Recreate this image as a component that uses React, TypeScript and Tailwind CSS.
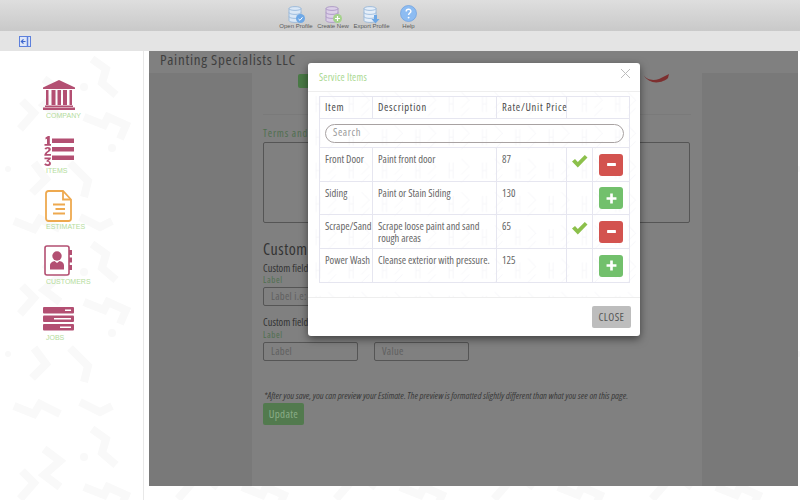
const narrow = "font-['Open_Sans',sans-serif] font-stretch-condensed";

function Cylinder({ fill, line }: { fill: string; line: string }) {
  return (
    <g stroke={line} strokeWidth="0.8">
      <path d="M2 4.5C2 2 14 2 14 4.5V16.5C14 19 2 19 2 16.5Z" fill={fill} />
      <path d="M2 4.5C2 7 14 7 14 4.5M2 8.5C2 11 14 11 14 8.5M2 12.5C2 15 14 15 14 12.5" fill="none" />
    </g>
  );
}

function OpenIcon() {
  return (
    <svg width="19" height="20" viewBox="0 0 19 20">
      <Cylinder fill="#dbe8f6" line="#8fb2d8" />
      <circle cx="13.5" cy="14.5" r="4.5" fill="#6ea8e6" />
      <path d="M11.5 15l1.5 1.3 2.5-3" fill="none" stroke="#fff" strokeWidth="1" />
    </svg>
  );
}

function CreateIcon() {
  return (
    <svg width="19" height="20" viewBox="0 0 19 20">
      <Cylinder fill="#dcd0e8" line="#a48fc0" />
      <circle cx="13.5" cy="14.5" r="4.5" fill="#a5d28c" />
      <path d="M13.5 12v5M11 14.5h5" fill="none" stroke="#fff" strokeWidth="1.2" />
    </svg>
  );
}

function ExportIcon() {
  return (
    <svg width="19" height="20" viewBox="0 0 19 20">
      <Cylinder fill="#e6eff9" line="#8fb2d8" />
      <path d="M12 11h3v4h2.5l-4 4.5-4-4.5H12Z" fill="#6ea8e6" />
    </svg>
  );
}

function HelpIcon() {
  return (
    <svg width="17" height="17" viewBox="0 0 17 17">
      <circle cx="8.5" cy="8.5" r="8" fill="#8dbcf2" stroke="#6c9fe0" strokeWidth="0.7" />
      <path d="M6.2 6.4C6.2 3.6 10.9 3.6 10.9 6.3 10.9 8 8.6 8 8.6 10" fill="none" stroke="#fff" strokeWidth="1.4" />
      <circle cx="8.6" cy="12.6" r="0.95" fill="#fff" />
    </svg>
  );
}

function CompanyIcon() {
  return (
    <svg width="32" height="30" viewBox="0 0 32 30" fill="#b34f72">
      <path d="M16 0 32 7.5V9H0V7.5Z" />
      <path d="M3 10h2.5v15H3zM8.5 10h4v15h-4zM14.5 10h3.5v15h-3.5zM20 10h4v15h-4zM26.5 10H29v15h-2.5z" />
      <path d="M2 25.5h28V27H2zM0 27.5h32V30H0z" />
    </svg>
  );
}

function ItemsIcon() {
  return (
    <svg width="31" height="30" viewBox="0 0 31 30" fill="#b34f72">
      <rect x="9" y="2.5" width="22" height="4.5" />
      <rect x="9" y="11" width="22" height="4.5" />
      <rect x="9" y="19.5" width="22" height="4.5" />
      <path d="M2.5 1.5 5 0h1.8v8H8v1.8H1.5V8H4V2.8L2.5 3.6Z" />
      <path d="M1.5 13C1.800 10.500 7.800 10 7.800 13.300 7.800 15.500 4.500 16 3.800 18H8v1.700H1.300C1.300 16 5.500 15 5.500 13.400 5.500 12.200 3.800 12.200 3.400 13.500Z" />
      <path d="M1.500 21.500H7.800V23L5.300 25C9.300 25.500 8.500 30.300 4.500 30 2.800 30 1.800 29.300 1.200 28.300L2.800 27.300C3.500 28.600 6 28.600 6 27 6 25.800 4.800 25.800 3.600 25.900V24.500L5.300 23.200H1.500Z" />
    </svg>
  );
}

function EstimatesIcon() {
  return (
    <svg width="27" height="32" viewBox="0 0 27 32" fill="none" stroke="#eea94f">
      <path d="M3.500 1H18L26 9.500V28.500C26 30 25 31 23.500 31H3.500C2 31 1 30 1 28.500V3.500C1 2 2 1 3.500 1Z" strokeWidth="1.800" />
      <path d="M18 1.500V9.500H25.500" strokeWidth="1.800" />
      <path d="M8 14.500H20M10.500 19H20M8 23.500H20" strokeWidth="1.800" />
    </svg>
  );
}

function CustomersIcon() {
  return (
    <svg width="29" height="31" viewBox="0 0 29 31">
      <rect x="1" y="1" width="24" height="29" rx="2" fill="#fff" stroke="#b34f72" strokeWidth="1.600" />
      <path d="M25 5h3v5h-3zM25 12.500h3v5h-3zM25 20h3v5h-3z" fill="#b34f72" />
      <circle cx="13" cy="11" r="4.700" fill="#b34f72" />
      <path d="M6 24.500V20.500C6 17.500 9 16.500 10.500 16L13 18 15.500 16C17.500 16.500 20 17.500 20 20.500V24.500Z" fill="#b34f72" />
    </svg>
  );
}

function JobsIcon() {
  return (
    <svg width="31" height="24" viewBox="0 0 31 24">
      <rect y="0" width="31" height="6.500" rx="1" fill="#b34f72" />
      <rect y="8.500" width="31" height="6.500" rx="1" fill="#b34f72" />
      <rect y="17" width="31" height="6.500" rx="1" fill="#b34f72" />
      <rect x="22" y="2.500" width="6" height="1.500" fill="#fff" />
      <rect x="11" y="11" width="17" height="1.500" fill="#fff" />
      <rect x="17" y="19.500" width="11" height="1.500" fill="#fff" />
    </svg>
  );
}

const tools = [
  { label: 'Open Profile', icon: <OpenIcon />, cls: 'w-[36px]' },
  { label: 'Create New', icon: <CreateIcon />, cls: 'w-[36px]' },
  { label: 'Export Profile', icon: <ExportIcon />, cls: 'w-[39px]' },
  { label: 'Help', icon: <HelpIcon />, cls: 'w-[33px]' },
];

const navItems = [
  { label: 'COMPANY', icon: <CompanyIcon />, cls: 'h-[56px]', box: 'h-[31px]', pad: 'pl-0' },
  { label: 'ITEMS', icon: <ItemsIcon />, cls: 'h-[54px]', box: 'h-[30px]', pad: 'pl-0' },
  { label: 'ESTIMATES', icon: <EstimatesIcon />, cls: 'h-[55px]', box: 'h-[32px]', pad: 'pl-[2px]' },
  { label: 'CUSTOMERS', icon: <CustomersIcon />, cls: 'h-[62px]', box: 'h-[32px]', pad: 'pl-[1px]' },
  { label: 'JOBS', icon: <JobsIcon />, cls: 'h-[40px]', box: 'h-[26px]', pad: 'pl-0' },
];

const rows = [
  { item: 'Front Door', desc: 'Paint front door', rate: '87', added: true, h: 'h-[34px]' },
  { item: 'Siding', desc: 'Paint or Stain Siding', rate: '130', added: false, h: 'h-[33px]' },
  { item: 'Scrape/Sand', desc: 'Scrape loose paint and sand rough areas', rate: '65', added: true, h: 'h-[34px]' },
  { item: 'Power Wash', desc: 'Cleanse exterior with pressure.', rate: '125', added: false, h: 'h-[34px]' },
];

function Zigzags() {
  return (
    <svg className="absolute inset-0 h-full w-full" aria-hidden="true">
      <defs>
        <pattern id="zig" x="0" y="0" width="158" height="185" patternUnits="userSpaceOnUse">
          <g fill="none" stroke="#f9f9f9" strokeWidth="8">
            <path d="M44 28 60 40 44 54 60 66" />
            <path d="M22 50 34 62 20 78" />
            <path d="M92 8 106 18 102 32 116 44" />
            <path d="M84 66 104 74 108 66 126 74 120 88" />
            <path d="M34 112 46 128 32 142" />
            <path d="M70 112 88 130 84 146" />
            <path d="M14 170 34 178 40 168 60 178" />
            <path d="M80 166 100 176 112 170" />
          </g>
          <circle cx="84" cy="36" r="4" fill="#f9f9f9" />
          <circle cx="112" cy="97" r="4" fill="#f9f9f9" />
          <circle cx="8" cy="118" r="3" fill="#f9f9f9" />
        </pattern>
      </defs>
      <rect width="100%" height="100%" fill="url(#zig)" />
    </svg>
  );
}

function ModalPattern() {
  return (
    <svg className="absolute inset-0 h-full w-full" aria-hidden="true">
      <defs>
        <pattern id="hex" x="0" y="0" width="33.300" height="33.300" patternUnits="userSpaceOnUse">
          <path d="M8 4V20M12 4V20M8 12H12M20 0 28 8 20 16M28 16 20 24" fill="none" stroke="#f4f4f8" strokeWidth="0.800" />
        </pattern>
      </defs>
      <rect width="100%" height="100%" fill="url(#hex)" />
    </svg>
  );
}

function ActionButton({ added }: { added: boolean }) {
  return (
    <button className={`mx-auto flex h-[22px] w-[24px] items-center justify-center rounded-[3px] ${added ? 'bg-[#d3534f]' : 'bg-[#72c06c]'}`}>
      <svg width="11" height="11" viewBox="0 0 10 10">
        {added ? <rect x="1" y="3.700" width="8" height="2.600" rx="0.500" fill="#fff" /> : <path d="M3.800 0.500h2.400v3.300H9.500v2.400H6.200V9.500H3.800V6.200H0.500V3.800h3.300Z" fill="#fff" />}
      </svg>
    </button>
  );
}

function ServiceItemsModal() {
  return (
    <div className="absolute left-[159px] top-[12px] w-[332px] h-[273px] rounded-[3px] bg-white shadow-[0_3px_9px_rgba(0,0,0,0.5)] flex flex-col">
      <div className="h-[29px] border-b border-[#eeeeee] pl-[11px] pr-[9px] flex items-center justify-between">
        <span className="text-[10px] tracking-[0.2px] text-[#a9d88f] mt-[1px]">Service Items</span>
        <svg width="11" height="11" viewBox="0 0 11 11" className="mb-[7px]">
          <path d="M1 1 10 10M10 1 1 10" stroke="#bdbdbd" strokeWidth="1" />
        </svg>
      </div>

      <div className="relative h-[205px] pl-[11px] pt-[4px]">
        <ModalPattern />
        <table className="relative w-[310px] table-fixed border-collapse text-[10.500px] text-[#666666]">
          <colgroup>
            <col className="w-[53px]" />
            <col className="w-[124px]" />
            <col className="w-[70px]" />
            <col className="w-[26px]" />
            <col className="w-[37px]" />
          </colgroup>
          <thead>
            <tr className="h-[22px]">
              <th className="border border-[#e6e6f0] pl-[5px] text-left font-normal text-[#4a4a4a] tracking-[0.7px]">Item</th>
              <th className="border border-[#e6e6f0] pl-[5px] text-left font-normal text-[#4a4a4a] tracking-[0.7px]">Description</th>
              <th className="border border-[#e6e6f0] pl-[5px] text-left font-normal text-[#4a4a4a] tracking-[0.7px] whitespace-nowrap">Rate/Unit Price</th>
              <th colSpan={2} className="border border-[#e6e6f0]" />
            </tr>
          </thead>
          <tbody>
            <tr className="h-[29px]">
              <td colSpan={5} className="border border-[#e6e6f0] px-[5px]">
                <div className="h-[19px] rounded-full border border-[#a8a2a2] pl-[7px] flex items-center text-[#999999] tracking-[0.6px]">Search</div>
              </td>
            </tr>
            {rows.map((r) => (
              <tr key={r.item} className={r.h}>
                <td className="border border-[#e6e6f0] pl-[5px] pt-[5px] align-top leading-[12px] whitespace-nowrap">{r.item}</td>
                <td className="border border-[#e6e6f0] pl-[5px] pr-[2px] pt-[5px] align-top leading-[12px]">{r.desc}</td>
                <td className="border border-[#e6e6f0] pl-[5px] pt-[5px] align-top leading-[12px]">{r.rate}</td>
                <td className="border border-[#e6e6f0] pt-[6px] align-top">
                  {r.added && (
                    <svg width="17" height="14" viewBox="0 0 17 14" className="mx-auto">
                      <path d="M1 7.500 4 5 6.800 8 13.800 1 16.500 3.500 6.800 13.500Z" fill="#8cc04b" />
                    </svg>
                  )}
                </td>
                <td className="border border-[#e6e6f0] align-middle">
                  <ActionButton added={r.added} />
                </td>
              </tr>
            ))}
          </tbody>
        </table>
      </div>

      <div className="flex-1 border-t border-[#eeeeee] pt-[8px] pr-[9px] flex justify-end">
        <button className="h-[22px] w-[39px] rounded-[2px] bg-[#bdbdbd] text-[11px] tracking-[0.4px] text-[#555555]">CLOSE</button>
      </div>
    </div>
  );
}

function FieldInput({ placeholder }: { placeholder: string }) {
  return (
    <div className="h-[19px] w-[95px] rounded-[2px] border border-[#555555] pl-[7px] flex items-center text-[10.500px] text-[#5f5f5f] tracking-[0.3px]">
      {placeholder}
    </div>
  );
}

export default function App() {
  return (
    <div className={`${narrow} relative h-[500px] w-[800px] overflow-hidden bg-white`}>
      <div className="h-[31px] bg-gradient-to-b from-[#dedede] to-[#c9c9c9] pl-[278px] flex items-start gap-[1px] pt-[4px]">
        {tools.map((t) => (
          <div key={t.label} className={`${t.cls} flex flex-col items-center`}>
            <div className="h-[19px] flex items-center">{t.icon}</div>
            <span className="text-[6px] leading-[6px] whitespace-nowrap font-['Liberation_Sans',sans-serif] font-stretch-normal text-[#5a5a5a]">{t.label}</span>
          </div>
        ))}
      </div>

      <div className="h-[20px] bg-[#e4e4e4] pl-[19px] pt-[5px]">
        <svg width="12" height="11" viewBox="0 0 12 11">
          <rect x="0.500" y="0.500" width="11" height="10" fill="#dfe7f8" stroke="#5d80dc" />
          <path d="M8.500 1v9" stroke="#5d80dc" strokeWidth="1.500" />
          <path d="M2.500 5.500h4M4.500 3.300 2.300 5.500 4.500 7.700" fill="none" stroke="#3e66cc" strokeWidth="1.200" />
        </svg>
      </div>

      <div className="relative h-[449px] flex">
        <Zigzags />
        <nav className="relative w-[144px] shrink-0 border-r border-[#e8e8e8] pl-[43px] pt-[29px]">
          {navItems.map((n) => (
            <div key={n.label} className={n.cls}>
              <div className={`${n.pad} ${n.box}`}>{n.icon}</div>
              <div className="pl-[3px] text-[7px] leading-[9px] font-['Liberation_Sans',sans-serif] font-stretch-normal text-[#b4dc9c]">{n.label}</div>
            </div>
          ))}
        </nav>

        <main className="relative ml-[5px] h-[435px] w-[649px] bg-[#808080] flex flex-col">
          <h1 className="h-[22px] pl-[11px] text-[15px] leading-[17px] tracking-[0.7px] text-[#3f3f3f]">Painting Specialists LLC</h1>
          <div className="flex flex-1">
            <div className="w-[103px] bg-[#797979]" />
            <section className="w-[450px] pl-[11px] pr-[12px]">
              <div className="relative h-[41px] border-b border-[#7a7a7a] mr-[-1px]">
                <div className="ml-[35px] mt-[1px] h-[14px] w-[30px] rounded-[2px] bg-[#4a7a46]" />
                <svg width="30" height="10" viewBox="0 0 30 10" className="absolute right-[20px] top-0">
                  <path d="M2 0C5 6 12 7 18 5L28 0 27 4C22 9 8 12 2 0Z" fill="#7d2f2f" />
                </svg>
              </div>
              <div className="mt-[12px] text-[10.500px] leading-[12px] tracking-[0.8px] text-[#4f6f4f]">Terms and Conditions</div>
              <div className="mt-[3px] h-[81px] rounded-[2px] border border-[#555555]" />
              <div className="mt-[17px] text-[16px] leading-[19px] tracking-[0.5px] text-[#333333]">Custom Fields</div>
              <div className="mt-[3px] text-[10.500px] leading-[12px] text-[#333333]">Custom field 1</div>
              <div className="mt-[1px] text-[9px] leading-[10px] tracking-[0.6px] text-[#4f6f4f]">Label</div>
              <div className="mt-[2px] flex gap-[16px]">
                <FieldInput placeholder="Label i.e: License" />
                <FieldInput placeholder="Value" />
              </div>
              <div className="mt-[10px] text-[10.500px] leading-[12px] text-[#333333]">Custom field 2</div>
              <div className="mt-[2px] text-[9px] leading-[10px] tracking-[0.6px] text-[#4f6f4f]">Label</div>
              <div className="mt-[2px] flex gap-[16px]">
                <FieldInput placeholder="Label" />
                <FieldInput placeholder="Value" />
              </div>
              <p className="mt-[31px] pl-[1px] whitespace-nowrap text-[9.500px] leading-[8px] italic text-[#3a3a3a]">
                *After you save, you can preview your Estimate. The preview is formatted slightly different than what you see on this page.
              </p>
              <button className="mt-[-1px] h-[22px] w-[41px] rounded-[2px] bg-[#527a4e] text-[11px] tracking-[0.3px] text-[#8aad87]">Update</button>
            </section>
            <div className="w-[96px] bg-[#797979]" />
          </div>
          <ServiceItemsModal />
        </main>
      </div>
    </div>
  );
}
